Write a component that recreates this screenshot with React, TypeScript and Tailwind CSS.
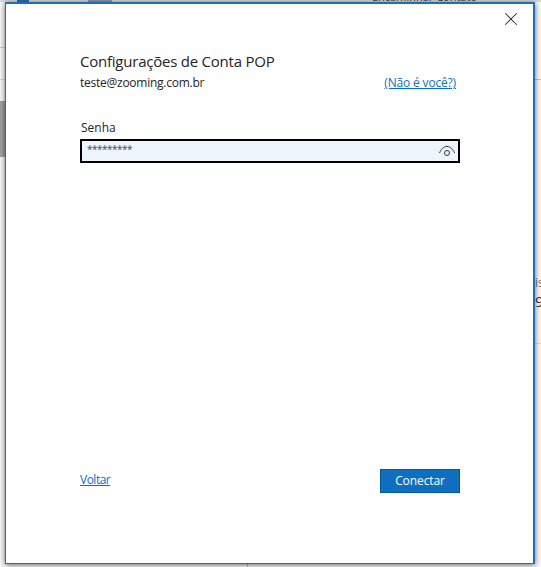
import { X } from "lucide-react";

const font = { fontFamily: '"Open Sans", "Noto Sans", sans-serif' };

function EyeIcon() {
  return (
    <svg width="18" height="12" viewBox="0 0 18 12" fill="none" stroke="#3a3a3a" strokeWidth="1" className="block">
      <path d="M1.5 8C3 4 5.8 1.5 9 1.5s6 2.5 7.5 6.5" />
      <circle cx="9" cy="8" r="2.5" />
    </svg>
  );
}

// slivers of the mail window that show around the dialog
function Backdrop() {
  return (
    <div className="h-full flex flex-col">
      <div className="h-[2px] flex shrink-0 bg-[#d8d8d8]">
        <div className="ml-[17px] w-[12px] bg-[#2b6fb3]" />
        <div className="ml-[59px] w-[24px] bg-[#8f9aa5]" />
        <div className="ml-auto mr-[64px] -mt-[9px] text-[11px] leading-[12px] whitespace-nowrap text-[#444]">
          Encaminhar Contato
        </div>
      </div>
      <div className="flex-1 flex justify-between">
        <div className="w-[5px] flex flex-col">
          <div className="mt-[45px] h-px bg-[#cfcfcf]" />
          <div className="mt-[31px] h-px bg-[#dcdcdc]" />
          <div className="mt-[21px] h-[56px] bg-[#a3a3a3]" />
        </div>
        <div className="w-[6px] overflow-hidden flex flex-col">
          <div className="mt-[77px] h-px bg-[#c8c8c8]" />
          <div className="mt-[196px] text-[12px] leading-[14px] text-[#777]">is</div>
          <div className="mt-[2px] text-[15px] leading-[18px] text-[#333]">9</div>
          <div className="mt-[33px] h-px bg-[#dcdcdc]" />
        </div>
      </div>
      <div className="h-[3px] shrink-0">
        <div className="ml-[247px] w-px h-full bg-[#bcbcbc]" />
      </div>
    </div>
  );
}

export default function App() {
  return (
    <div className="relative w-[541px] h-[567px] overflow-hidden bg-[#fafafa] text-[#252423]" style={font}>
      <Backdrop />

      <div className="absolute left-[5px] top-[2px] w-[530px] h-[562px] bg-white border border-r-2 border-t-2 border-[#1e6fb8] shadow-[0_1px_6px_rgba(0,0,0,0.6)] flex flex-col pl-[74px] pr-[73px]">
        <div className="mt-[4px] -mr-[62px] flex justify-end">
          <button type="button" className="text-[#333]" aria-label="Fechar">
            <X className="w-[22px] h-[22px]" strokeWidth={1.1} />
          </button>
        </div>

        <h1 className="mt-[21px] text-[15px] leading-[20px] font-normal tracking-[-0.23px]">Configurações de Conta POP</h1>
        <div className="mt-[3px] flex items-center justify-between text-[12px] leading-[18px]">
          <span className="tracking-[-0.25px]">teste@zooming.com.br</span>
          <a href="#" className="mr-[4px] text-[#106ebe] underline tracking-[-0.17px]">(Não é você?)</a>
        </div>

        <label className="mt-[28px] text-[12px] leading-[16px] pl-px">Senha</label>
        <div className="mt-[3px] h-[24px] border-2 border-black bg-[#eef4fb] flex items-center justify-between pl-[5px] pr-[2px]">
          <span className="text-[10px] leading-[12px] -mt-[5px] tracking-[-0.5px] text-[#444]">*********</span>
          <EyeIcon />
        </div>

        <div className="mt-auto mb-[70px] flex items-start justify-between">
          <a href="#" className="mt-[2px] text-[12px] leading-[18px] text-[#106ebe] underline tracking-[-0.5px]">Voltar</a>
          <button type="button" className="w-[80px] h-[24px] bg-[#106ebe] border border-[#005a9e] text-white text-[12px] leading-none tracking-[-0.1px]">
            Conectar
          </button>
        </div>
      </div>
    </div>
  );
}
